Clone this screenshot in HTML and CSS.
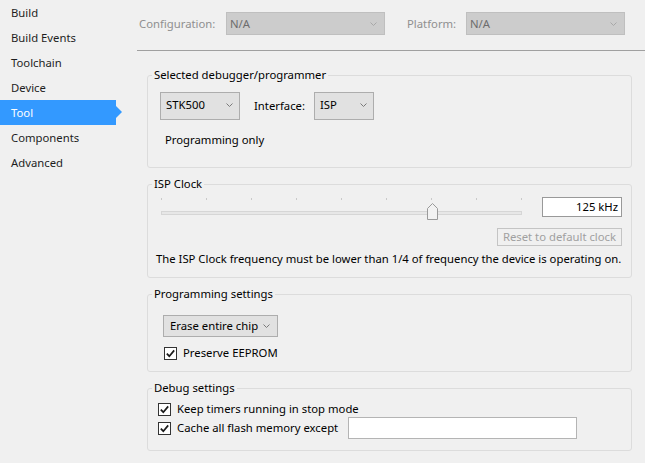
FILE: index.html
```html
<!DOCTYPE html>
<html lang="en">
<head>
    <meta charset="UTF-8">
    <title>Tool</title>
    <link rel="stylesheet" href="styles.css">
</head>
<body>

<div class="window">
    <ul class="nav">
        <li>Build</li>
        <li>Build Events</li>
        <li>Toolchain</li>
        <li>Device</li>
        <li class="active">Tool</li>
        <li>Components</li>
        <li>Advanced</li>
    </ul>

    <div class="main">
        <div class="toolbar">
            <label class="cfg-label">Configuration:</label>
            <div class="combo disabled">
                <span>N/A</span>
                <svg class="chev" width="7" height="4" viewBox="0 0 7 4"><path d="M0.5 0.5 L3.5 3.5 L6.5 0.5" fill="none" stroke="#a8a8a8"/></svg>
            </div>
            <label class="plat-label">Platform:</label>
            <div class="combo disabled">
                <span>N/A</span>
                <svg class="chev" width="7" height="4" viewBox="0 0 7 4"><path d="M0.5 0.5 L3.5 3.5 L6.5 0.5" fill="none" stroke="#a8a8a8"/></svg>
            </div>
        </div>

        <div class="panel">
            <fieldset class="group debugger">
                <legend>Selected debugger/programmer</legend>
                <div class="row">
                    <div class="combo tool-combo">
                        <span>STK500</span>
                        <svg class="chev" width="7" height="4" viewBox="0 0 7 4"><path d="M0.5 0.5 L3.5 3.5 L6.5 0.5" fill="none" stroke="#7a7a7a"/></svg>
                    </div>
                    <span class="iface-label">Interface:</span>
                    <div class="combo iface-combo">
                        <span>ISP</span>
                        <svg class="chev" width="7" height="4" viewBox="0 0 7 4"><path d="M0.5 0.5 L3.5 3.5 L6.5 0.5" fill="none" stroke="#7a7a7a"/></svg>
                    </div>
                </div>
                <p class="note">Programming only</p>
            </fieldset>

            <fieldset class="group clock">
                <legend>ISP Clock</legend>
                <div class="row slider-row">
                    <svg class="slider" width="370" height="24" viewBox="0 0 370 24">
                        <g fill="#c9c9c9">
                            <rect x="5" y="2" width="1" height="2"/>
                            <rect x="50" y="2" width="1" height="2"/>
                            <rect x="95" y="2" width="1" height="2"/>
                            <rect x="140" y="2" width="1" height="2"/>
                            <rect x="185" y="2" width="1" height="2"/>
                            <rect x="230" y="2" width="1" height="2"/>
                            <rect x="275" y="2" width="1" height="2"/>
                            <rect x="320" y="2" width="1" height="2"/>
                            <rect x="365" y="2" width="1" height="2"/>
                        </g>
                        <rect x="5.5" y="15.5" width="360" height="3" fill="#e7e7e7" stroke="#d6d6d6"/>
                        <path d="M276.5 7.5 L281.5 12.5 L281.5 23.5 L271.5 23.5 L271.5 12.5 Z" fill="#f2f2f2" stroke="#9a9a9a"/>
                    </svg>
                    <div class="field khz">125 kHz</div>
                </div>
                <div class="row btn-row">
                    <button class="reset" disabled>Reset to default clock</button>
                </div>
                <p class="hint">The ISP Clock frequency must be lower than 1/4 of frequency the device is operating on.</p>
            </fieldset>

            <fieldset class="group programming">
                <legend>Programming settings</legend>
                <div class="combo erase-combo">
                    <span>Erase entire chip</span>
                    <svg class="chev" width="7" height="4" viewBox="0 0 7 4"><path d="M0.5 0.5 L3.5 3.5 L6.5 0.5" fill="none" stroke="#7a7a7a"/></svg>
                </div>
                <div class="row check-row eeprom">
                    <span class="check"><svg width="11" height="11" viewBox="0 0 11 11"><path d="M1.8 5.6 L4.3 8.2 L9.2 2.4" fill="none" stroke="#1a1a1a" stroke-width="1.7"/></svg></span>
                    <span>Preserve EEPROM</span>
                </div>
            </fieldset>

            <fieldset class="group debug">
                <legend>Debug settings</legend>
                <div class="row check-row">
                    <span class="check"><svg width="11" height="11" viewBox="0 0 11 11"><path d="M1.8 5.6 L4.3 8.2 L9.2 2.4" fill="none" stroke="#1a1a1a" stroke-width="1.7"/></svg></span>
                    <span>Keep timers running in stop mode</span>
                </div>
                <div class="row check-row cache-row">
                    <span class="check"><svg width="11" height="11" viewBox="0 0 11 11"><path d="M1.8 5.6 L4.3 8.2 L9.2 2.4" fill="none" stroke="#1a1a1a" stroke-width="1.7"/></svg></span>
                    <span class="cache-label">Cache all flash memory except</span>
                    <div class="field cache"></div>
                </div>
            </fieldset>
        </div>
    </div>
</div>

</body>
</html>
```

FILE: styles.css
```css
/* Project properties - Tool page */
* {
    box-sizing: border-box;
}
body {
    margin: 0;
    width: 645px;
    height: 463px;
    overflow: hidden;
    background-color: #f0f0f0;
    font-family: "Noto Sans", sans-serif;
    font-size: 11.3px;
    line-height: 16px;
    color: #000;
}
.window {
    display: flex;
    height: 463px;
}

/* left tab list */
.nav {
    list-style: none;
    margin: 0;
    padding: 0;
    width: 137px;
    flex: none;
}
.nav li {
    position: relative;
    width: 116px;
    height: 25px;
    line-height: 25px;
    padding-left: 11px;
    color: #1e1e1e;
}
.nav li.active {
    background-color: #3399ff;
    color: #fff;
}
.nav li.active::after {
    content: "";
    position: absolute;
    left: 116px;
    top: 6px;
    border-left: 6px solid #3399ff;
    border-top: 6px solid transparent;
    border-bottom: 6px solid transparent;
}

.main {
    flex: 1;
    min-width: 0;
}

/* configuration / platform bar */
.toolbar {
    display: flex;
    align-items: flex-start;
    height: 51px;
    padding: 12px 0 0 2px;
    border-bottom: 1px solid #a0a0a0;
}
.toolbar label {
    line-height: 23px;
    color: #8f8f8f;
}
.cfg-label {
    width: 87px;
}
.plat-label {
    width: 59px;
    margin-left: 22px;
}
.combo {
    display: flex;
    align-items: center;
    justify-content: space-between;
    flex: none;
    border: 1px solid #adadad;
    background-color: #e1e1e1;
    padding: 0 6px 0 5px;
}
.combo.disabled {
    width: 159px;
    height: 23px;
    padding: 0 7px 0 3px;
    background-color: #cccccc;
    border-color: #bfbfbf;
    color: #6d6d6d;
}
.chev {
    display: block;
    flex: none;
}

/* group boxes */
.panel {
    padding: 16px 0 0 10px;
}
.group {
    width: 485px;
    min-width: 0;
    margin: 8px 0 0;
    padding: 0 9px 0 8px;
    border: 1px solid #dcdcdc;
    border-radius: 3px;
}
.group:first-child {
    margin-top: 0;
}
legend {
    padding: 0 2px;
    margin-left: -4px;
    line-height: 16px;
}
.row {
    display: flex;
    align-items: center;
}
p {
    margin: 0;
}

.debugger {
    padding-top: 9px;
    padding-bottom: 19px;
}
.tool-combo {
    width: 80px;
    height: 28px;
    margin-left: 4px;
    align-items: flex-start;
    padding-top: 4px;
}
.tool-combo .chev,
.iface-combo .chev {
    margin-top: 6px;
}
.iface-label {
    margin-left: 14px;
    width: 60px;
}
.iface-combo {
    width: 60px;
    height: 28px;
    align-items: flex-start;
    padding-top: 4px;
}
.note {
    margin: 12px 0 0 9px;
}

.clock {
    padding-top: 4px;
    padding-bottom: 10px;
}
.slider-row {
    align-items: flex-start;
    height: 24px;
}
.slider {
    display: block;
}
.field {
    background-color: #fff;
    border: 1px solid #999;
}
.khz {
    width: 80px;
    height: 20px;
    margin: 1px 0 0 auto;
    padding-right: 3px;
    text-align: right;
    line-height: 18px;
}
.btn-row {
    justify-content: flex-end;
    margin-top: 8px;
}
.reset {
    width: 125px;
    height: 18px;
    padding: 0;
    font: inherit;
    line-height: 16px;
    color: #a0a0a0;
    background-color: #f0f0f0;
    border: 1px solid #c4c4c4;
}
.hint {
    margin-top: 5px;
}

.programming {
    padding-top: 13px;
    padding-bottom: 10px;
}
.erase-combo {
    width: 115px;
    height: 22px;
    margin-left: 7px;
    padding: 0 7px 0 6px;
}
.check-row {
    height: 16px;
}
.eeprom {
    margin: 8px 0 0 8px;
}
.check {
    display: inline-flex;
    align-items: center;
    justify-content: center;
    flex: none;
    width: 13px;
    height: 13px;
    margin-right: 6px;
    border: 1px solid #333;
    background-color: #fff;
}

.debug {
    padding-top: 5px;
    padding-bottom: 11px;
}
.debug .check-row {
    margin-left: 2px;
}
.cache-row {
    height: 22px;
}
.cache-label {
    width: 171px;
    flex: none;
}
.cache {
    width: 229px;
    height: 22px;
    border-color: #b4b4b4;
}
```
